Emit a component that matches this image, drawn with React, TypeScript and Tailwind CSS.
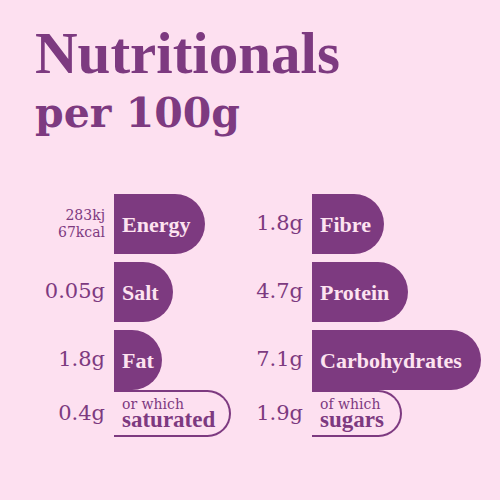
const serif = "font-['Liberation_Serif',serif]";
const deja = "font-['DejaVu_Serif',serif]";

type Row = {
  value: React.ReactNode;
  label: string;
  width: number;
};

type Sub = {
  value: string;
  prefix: string;
  label: string;
  width: number;
};

const Bar = ({ label, width }: { label: string; width: number }) => (
  <div
    className="flex h-[60px] items-center rounded-r-full bg-[#7d3a80] pl-[8px]"
    style={{ width }}
  >
    <span className={`${serif} text-[22px] font-bold text-[#fde3f0]`}>{label}</span>
  </div>
);

const Column = ({
  rows,
  sub,
  valueWidth,
}: {
  rows: Row[];
  sub: Sub;
  valueWidth: string;
}) => (
  <div className="flex flex-col gap-[8px]">
    {rows.map((r) => (
      <div key={r.label} className="flex items-center gap-[9px]">
        <div className={`${valueWidth} text-right`}>{r.value}</div>
        <Bar label={r.label} width={r.width} />
      </div>
    ))}
    <div className="-mt-[8px] flex items-center gap-[9px]">
      <div className={`${valueWidth} text-right ${deja} text-[21px] text-[#7d3a80]`}>
        {sub.value}
      </div>
      <div
        className="flex h-[47px] flex-col justify-center rounded-r-full border-2 border-l-0 border-[#7d3a80] pb-[2px] pl-[8px] text-[#7d3a80]"
        style={{ width: sub.width }}
      >
        <span className={`${deja} text-[14px] leading-[14px]`}>{sub.prefix}</span>
        <span className={`${serif} text-[23px] font-bold leading-[17px]`}>{sub.label}</span>
      </div>
    </div>
  </div>
);

const val = (v: string) => (
  <span className={`${deja} text-[21px] text-[#7d3a80]`}>{v}</span>
);

export default function App() {
  const left: Row[] = [
    {
      value: (
        <div className={`${deja} text-[14px] leading-[17px] text-[#7d3a80]`}>
          <div>283kj</div>
          <div>67kcal</div>
        </div>
      ),
      label: 'Energy',
      width: 91,
    },
    { value: val('0.05g'), label: 'Salt', width: 59 },
    { value: val('1.8g'), label: 'Fat', width: 48 },
  ];
  const right: Row[] = [
    { value: val('1.8g'), label: 'Fibre', width: 72 },
    { value: val('4.7g'), label: 'Protein', width: 96 },
    { value: val('7.1g'), label: 'Carbohydrates', width: 169 },
  ];

  return (
    <div className="h-[500px] w-[500px] overflow-hidden bg-[#fde0f0] px-[35px] pt-[23px]">
      <h1 className={`${serif} text-[59px] font-bold leading-[60px] text-[#7d3a80]`}>
        Nutritionals
      </h1>
      <h2 className={`${deja} text-[41px] font-bold leading-[60px] text-[#7d3a80]`}>
        per 100g
      </h2>
      <div className="mt-[51px] grid grid-cols-[205px_1fr]">
        <Column
          rows={left}
          sub={{ value: '0.4g', prefix: 'or which', label: 'saturated', width: 117 }}
          valueWidth="w-[70px]"
        />
        <Column
          rows={right}
          sub={{ value: '1.9g', prefix: 'of which', label: 'sugars', width: 90 }}
          valueWidth="w-[63px]"
        />
      </div>
    </div>
  );
}
